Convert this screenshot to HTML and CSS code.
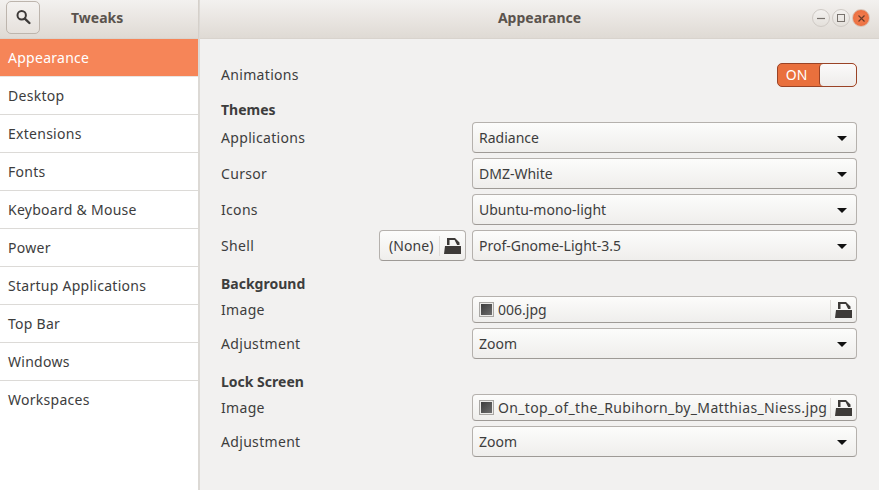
FILE: index.html
```html
<!DOCTYPE html>
<html lang="en">
<head>
<meta charset="utf-8">
<title>Tweaks</title>
<link rel="stylesheet" href="styles.css">
</head>
<body>
<div class="window">
  <aside class="left">
    <header class="bar left-bar">
      <button class="search" aria-label="Search">
        <svg width="16" height="16" viewBox="0 0 16 16"><circle cx="6.7" cy="5.3" r="4.2" fill="none" stroke="#3d3a38" stroke-width="2"/><path d="M9.8 8.6l4.6 4.4" stroke="#3d3a38" stroke-width="2.4" stroke-linecap="round"/></svg>
      </button>
      <span class="bar-title app-title">Tweaks</span>
    </header>
    <nav class="nav">
      <div class="nav-item active">Appearance</div>
      <div class="nav-item">Desktop</div>
      <div class="nav-item">Extensions</div>
      <div class="nav-item">Fonts</div>
      <div class="nav-item">Keyboard &amp; Mouse</div>
      <div class="nav-item">Power</div>
      <div class="nav-item">Startup Applications</div>
      <div class="nav-item">Top Bar</div>
      <div class="nav-item">Windows</div>
      <div class="nav-item">Workspaces</div>
    </nav>
  </aside>
  <main class="right">
    <header class="bar right-bar">
      <span class="bar-title">Appearance</span>
      <div class="wm">
        <span class="wm-btn"><svg width="8" height="8" viewBox="0 0 8 8"><path d="M0 4.5h8" stroke="#77726d" stroke-width="1.2"/></svg></span>
        <span class="wm-btn"><svg width="8" height="8" viewBox="0 0 8 8"><rect x=".5" y=".5" width="7" height="7" fill="none" stroke="#77726d" stroke-width="1"/></svg></span>
        <span class="wm-btn close"><svg width="7" height="7" viewBox="0 0 7 7"><path d="M.5.5l6 6M6.5.5l-6 6" stroke="#6b3a28" stroke-width="1.2"/></svg></span>
      </div>
    </header>
    <section class="content">
      <div class="row switch-row">
        <span class="label">Animations</span>
        <div class="switch"><span class="on">ON</span><span class="knob"></span></div>
      </div>
      <h2 class="heading">Themes</h2>
      <div class="row"><span class="label">Applications</span><div class="combo">Radiance<i class="arrow"></i></div></div>
      <div class="row"><span class="label">Cursor</span><div class="combo">DMZ-White<i class="arrow"></i></div></div>
      <div class="row"><span class="label">Icons</span><div class="combo">Ubuntu-mono-light<i class="arrow"></i></div></div>
      <div class="row"><span class="label">Shell</span>
        <div class="none-btn"><span class="none-text">(None)</span><span class="sep"></span>
          <svg class="open" width="17" height="16" viewBox="0 0 17 16"><path d="M3 0h8l4.5 4.5V7h-2.4L10.6 2H5.5v5H3z" fill="#3d3a38"/><path d="M1 8h16v8H0z" fill="#3d3a38"/></svg>
        </div>
        <div class="combo">Prof-Gnome-Light-3.5<i class="arrow"></i></div>
      </div>
      <h2 class="heading later">Background</h2>
      <div class="row"><span class="label">Image</span>
        <div class="file"><i class="thumb"></i><span class="file-name">006.jpg</span><span class="sep"></span>
          <svg class="open" width="17" height="16" viewBox="0 0 17 16"><path d="M3 0h8l4.5 4.5V7h-2.4L10.6 2H5.5v5H3z" fill="#3d3a38"/><path d="M1 8h16v8H0z" fill="#3d3a38"/></svg>
        </div>
      </div>
      <div class="row"><span class="label">Adjustment</span><div class="combo">Zoom<i class="arrow"></i></div></div>
      <h2 class="heading later">Lock Screen</h2>
      <div class="row"><span class="label">Image</span>
        <div class="file"><i class="thumb"></i><span class="file-name long">On_top_of_the_Rubihorn_by_Matthias_Niess.jpg</span><span class="sep"></span>
          <svg class="open" width="17" height="16" viewBox="0 0 17 16"><path d="M3 0h8l4.5 4.5V7h-2.4L10.6 2H5.5v5H3z" fill="#3d3a38"/><path d="M1 8h16v8H0z" fill="#3d3a38"/></svg>
        </div>
      </div>
      <div class="row"><span class="label">Adjustment</span><div class="combo">Zoom<i class="arrow"></i></div></div>
    </section>
  </main>
</div>
</body>
</html>
```
FILE: styles.css
```css
* { box-sizing: border-box; }
html, body { margin: 0; height: 100%; }
body {
  font-family: "Noto Sans", "Open Sans", sans-serif;
  font-size: 14px;
  color: #3d3d3d;
  background: #f2f1f0;
  overflow: hidden;
}
.window { display: flex; height: 490px; width: 879px; }
.left {
  width: 200px;
  flex: none;
  display: flex;
  flex-direction: column;
  border-right: 2px solid #dcd9d5;
  background: #fff;
}
.right { flex: 1; display: flex; flex-direction: column; min-width: 0; }
.bar {
  height: 39px;
  flex: none;
  display: flex;
  align-items: center;
  padding-bottom: 3px;
  background: linear-gradient(#f3f1ef, #dfdad4);
  border-bottom: 1px solid #d8d3cd;
}
.left-bar { padding-left: 6px; margin-right: -1px; border-right: 1px solid #d5d0ca; }
.bar-title { font-weight: 700; color: #5a534d; font-size: 14px; }
.app-title { margin-left: 31px; }
.right-bar { justify-content: center; position: relative; }
.search {
  width: 34px;
  height: 33px;
  padding: 0;
  display: flex;
  align-items: center;
  justify-content: center;
  border: 1px solid #bdb5ad;
  border-radius: 5px;
  background: linear-gradient(#f4f2f0, #e6e1dc);
}
.wm { position: absolute; right: 9px; top: 9px; display: flex; gap: 2px; }
.wm-btn {
  width: 18px;
  height: 18px;
  border-radius: 50%;
  display: flex;
  align-items: center;
  justify-content: center;
  border: 1px solid #cfcac5;
  background: linear-gradient(#f3f1ef, #e4e0db);
}
.wm-btn.close { border-color: #d9c3b6; background: radial-gradient(circle, #f27f52, #ea6a3a); }
.nav { display: flex; flex-direction: column; }
.nav-item {
  height: 38px;
  padding-left: 8px;
  display: flex;
  align-items: center;
  border-bottom: 1px solid #dcdad7;
  font-size: 14px;
  letter-spacing: .27px;
}
.nav-item:last-child { border-bottom-color: transparent; }
.nav-item.active { background: #f68558; color: #fff; border-bottom-color: #e8e5e2; }
.content { padding: 24px 22px 0 21px; display: flex; flex-direction: column; }
.row { display: flex; align-items: center; gap: 6px; margin-bottom: 5px; }
.switch-row { margin-bottom: 0; height: 24px; align-items: flex-start; }
.label { flex: 1; letter-spacing: .32px; }
.switch-row .label { line-height: 23px; }
.heading { margin: 13px 0 2px; height: 20px; line-height: 20px; font-size: 14px; font-weight: 700; color: #3d3d3d; }
.heading.later { margin-top: 8px; }
.switch {
  width: 80px;
  height: 24px;
  display: flex;
  border: 1px solid #9a4326;
  border-radius: 5px;
  background: #e9703d;
  color: #fff;
  overflow: hidden;
}
.on { width: 41px; padding-right: 4px; text-align: center; line-height: 22px; }
.knob {
  flex: 1;
  background: linear-gradient(#fbfafa, #eeecea);
  border-left: 1px solid #9a4326;
  border-radius: 4px;
}
.combo, .file, .none-btn {
  border: 1px solid #b5b1ad;
  border-bottom-color: #9e9a96;
  border-radius: 4px;
  background: linear-gradient(#fcfcfb, #efeeec);
  display: flex;
  align-items: center;
}
.combo {
  flex: none;
  width: 385px;
  height: 31px;
  padding: 0 9px 0 6px;
  justify-content: space-between;
}
.arrow {
  width: 0;
  height: 0;
  border-left: 5px solid transparent;
  border-right: 5px solid transparent;
  border-top: 5px solid #111;
  margin-top: 1px;
}
.none-btn { flex: none; width: 87px; height: 31px; padding-left: 9px; }
.none-text { flex: 1; letter-spacing: .1px; }
.sep { width: 1px; height: 20px; background: #dfdcd9; flex: none; }
.open { flex: none; margin: 0 4px 0 4px; }
.file { flex: none; width: 385px; height: 27px; padding-left: 6px; }
.file-name { flex: 1; margin-left: 4px; white-space: nowrap; }
.file-name.long { letter-spacing: .34px; }
.thumb {
  width: 15px;
  height: 15px;
  flex: none;
  border: 1px solid #a9a7a4;
  background: linear-gradient(135deg, #383838, #727272);
  box-shadow: inset 0 0 0 1px #ecebe9;
}
```
